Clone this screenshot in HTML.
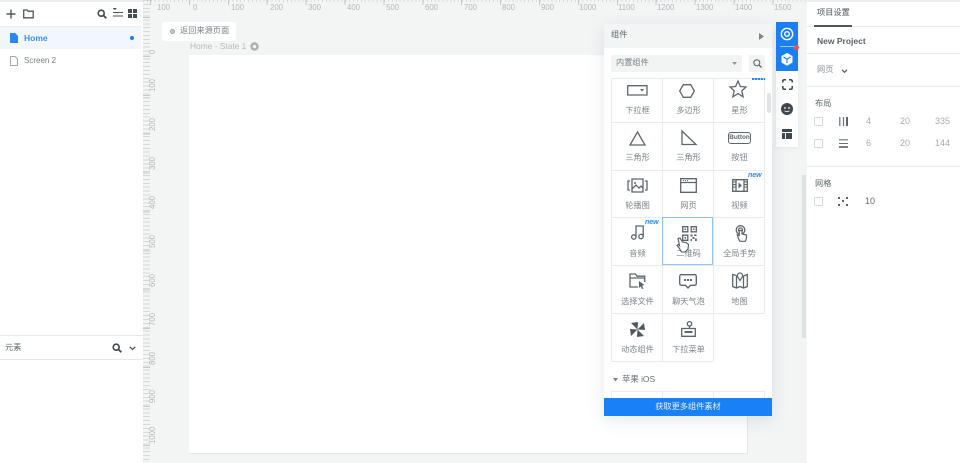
<!DOCTYPE html>
<html><head><meta charset="utf-8">
<style>
html,body{margin:0;padding:0;width:960px;height:463px;overflow:hidden;background:#f3f5f5;font-family:"Liberation Sans","Noto Sans CJK SC",sans-serif;color:#666e72}
#w{position:absolute;left:0;top:0;width:960px;height:463px;overflow:hidden;filter:blur(.3px)}
.a{position:absolute}
.t{position:absolute;white-space:nowrap;line-height:1}
.cell{position:absolute;width:51px;text-align:center;font-size:8.2px;color:#7d8588;white-space:nowrap;line-height:1}
.rl{position:absolute;top:4px;font-size:7.8px;color:#b3b8ba;line-height:1}
.rv{position:absolute;left:149px;font-size:7.8px;color:#b3b8ba;line-height:1;transform:rotate(-90deg);transform-origin:0 0}
svg{position:absolute;overflow:visible}
.i{fill:none;stroke:#5d666b;stroke-width:1.3}
.hl{position:absolute;height:1px;background:#e9ecec}
</style></head><body><div id="w">
<!-- rulers -->
<div class="a" style="left:143px;top:0;width:664px;height:2px;background:repeating-linear-gradient(90deg,#d5d9da 0 1px,transparent 1px 3.89px)"></div>
<div class="a" style="left:150px;top:0;width:657px;height:5px;background:repeating-linear-gradient(90deg,#c3c8ca 0 1px,transparent 1px 38.9px)"></div>
<div class="a" style="left:143px;top:0;width:7px;height:463px;background:repeating-linear-gradient(180deg,#d5d9da 0 1px,transparent 1px 3.89px)"></div>
<div class="a" style="left:143px;top:17px;width:7px;height:446px;background:repeating-linear-gradient(180deg,#c3c8ca 0 1px,transparent 1px 38.9px)"></div>
<div class="rl" style="left:157px">100</div><div class="rl" style="left:193px">0</div><div class="rl" style="left:231px">100</div><div class="rl" style="left:270px">200</div><div class="rl" style="left:308px">300</div><div class="rl" style="left:347px">400</div><div class="rl" style="left:386px">500</div><div class="rl" style="left:425px">600</div><div class="rl" style="left:464px">700</div><div class="rl" style="left:502px">800</div><div class="rl" style="left:541px">900</div><div class="rl" style="left:579px">1000</div><div class="rl" style="left:618px">1100</div><div class="rl" style="left:657px">1200</div><div class="rl" style="left:696px">1300</div><div class="rl" style="left:735px">1400</div><div class="rl" style="left:774px">1500</div>
<div class="rv" style="top:54px">0</div><div class="rv" style="top:92px">100</div><div class="rv" style="top:131px">200</div><div class="rv" style="top:170px">300</div><div class="rv" style="top:209px">400</div><div class="rv" style="top:248px">500</div><div class="rv" style="top:287px">600</div><div class="rv" style="top:326px">700</div><div class="rv" style="top:365px">800</div><div class="rv" style="top:403px">900</div><div class="rv" style="top:444px">1000</div>

<!-- canvas -->
<div class="a" style="left:189px;top:55px;width:558px;height:398px;background:#fff;border-right:1px solid #e6e8e8;border-bottom:1px solid #e6e8e8"></div>
<div class="a" style="left:162px;top:22px;width:74px;height:19px;background:#fff;border-radius:2px"></div>
<div class="a" style="left:170px;top:29px;width:3px;height:3px;border:1px solid #9aa2a5;background:#c5cacc;border-radius:50%"></div>
<div class="t" style="left:180px;top:27px;font-size:8.2px;color:#7a8286">返回来源页面</div>
<div class="t" style="left:190px;top:42px;font-size:8.4px;color:#b4b9bb">Home - State 1</div>
<svg style="left:250px;top:42px" width="9" height="9"><circle cx="4.5" cy="4.5" r="3" fill="none" stroke="#a9afb2" stroke-width="2.4"/></svg>

<!-- left panel -->
<div class="a" style="left:0;top:2px;width:143px;height:461px;background:#fff"></div>
<div class="a" style="left:0;top:0;width:143px;height:2px;background:#eceeee"></div>
<div class="a" style="left:0;top:26px;width:141px;height:1px;background:#eef0f0"></div>
<svg style="left:6px;top:9px" width="10" height="10"><path d="M5 0.5V9.5M0.5 5H9.5" stroke="#4d565b" stroke-width="1.4"/></svg>
<svg style="left:23px;top:9px" width="11" height="10"><path d="M.7 1H4L5 2.2H10.2V8.8H.7Z" fill="none" stroke="#4d565b" stroke-width="1.3"/></svg>
<svg style="left:97px;top:9px" width="10" height="10"><circle cx="4.2" cy="4.2" r="3" fill="none" stroke="#3f484d" stroke-width="1.6"/><path d="M6.5 6.5L9.3 9.3" stroke="#3f484d" stroke-width="1.8"/></svg>
<svg style="left:112px;top:8px" width="11" height="9"><path d="M1 .7H4.5M1 4.5H11M1 8H11" stroke="#4d565b" stroke-width="1.1"/><path d="M3 0V2" stroke="#4d565b"/></svg>
<svg style="left:128px;top:9px" width="9" height="9"><path d="M0 0H4V4H0ZM5 0H9V4H5ZM0 5H4V9H0ZM5 5H9V9H5Z" fill="#454e53"/></svg>
<div class="a" style="left:0;top:27px;width:141px;height:22px;background:#f2f7fd"></div>
<svg style="left:10px;top:33px" width="8" height="10"><path d="M0 0H5L8 3V10H0Z" fill="#2b86f0"/></svg>
<div class="t" style="left:24px;top:34px;font-size:8.5px;font-weight:bold;color:#3b8fee">Home</div>
<div class="a" style="left:130px;top:36px;width:4px;height:4px;border-radius:50%;background:#1b7ff0"></div>
<svg style="left:10px;top:56px" width="8" height="10"><path d="M.5.5H5L7.5 3V9.5H.5Z" fill="none" stroke="#a3a9ac"/></svg>
<div class="t" style="left:24px;top:56.5px;font-size:8px;color:#777f83">Screen 2</div>
<div class="a" style="left:0;top:335px;width:143px;height:1px;background:#e8eaea"></div>
<div class="a" style="left:0;top:359px;width:143px;height:1px;background:#e3e9f0"></div>
<div class="t" style="left:5px;top:344px;font-size:8.2px;color:#666e72">元素</div>
<svg style="left:112px;top:343px" width="10" height="10"><circle cx="4.2" cy="4.2" r="3" fill="none" stroke="#3f484d" stroke-width="1.6"/><path d="M6.5 6.5L9.3 9.3" stroke="#3f484d" stroke-width="1.8"/></svg>
<svg style="left:129px;top:346px" width="7" height="5"><path d="M.7.8L3.5 3.5L6.3.8" fill="none" stroke="#4d565b" stroke-width="1.3"/></svg>

<!-- right panel -->
<div class="a" style="left:807px;top:2px;width:153px;height:461px;background:#fff"></div>
<div class="a" style="left:807px;top:0;width:153px;height:2px;background:#eceeee"></div>
<div class="a" style="left:802px;top:175px;width:4px;height:163px;background:#dfe2e3"></div>
<div class="t" style="left:817px;top:9px;font-size:8.2px;color:#4f585d">项目设置</div>
<div class="hl" style="left:807px;top:26px;width:153px"></div>
<div class="a" style="left:814px;top:25px;width:38px;height:2px;background:#4d565b"></div>
<div class="t" style="left:817px;top:36.5px;font-size:8.5px;font-weight:bold;color:#5a6368">New Project</div>
<div class="hl" style="left:807px;top:53px;width:153px"></div>
<div class="t" style="left:817px;top:66px;font-size:8.2px;color:#8b9295">网页</div>
<svg style="left:841px;top:69px" width="7" height="5"><path d="M1 .8L3.5 3.3L6 .8" fill="none" stroke="#4d565b" stroke-width="1.2"/></svg>
<div class="hl" style="left:807px;top:86px;width:153px"></div>
<div class="t" style="left:815px;top:99.5px;font-size:8.2px;color:#5f686c">布局</div>
<div class="a" style="left:814px;top:117px;width:7px;height:7px;border:1px solid #d5d8d9;border-radius:1px"></div>
<svg style="left:839px;top:117px" width="9" height="9"><path d="M.8 0V9M4.5 0V9" stroke="#6a7276" stroke-width="1.2"/><path d="M8 0V9" stroke="#4d565b" stroke-width="1.8"/></svg>
<div class="t" style="left:866px;top:117px;font-size:9px;color:#a7acae">4</div>
<div class="t" style="left:900px;top:117px;font-size:9px;color:#a7acae">20</div>
<div class="t" style="left:935px;top:117px;font-size:9px;color:#a7acae">335</div>
<div class="a" style="left:814px;top:139px;width:7px;height:7px;border:1px solid #d5d8d9;border-radius:1px"></div>
<svg style="left:839px;top:139px" width="9" height="9"><path d="M0 .8H9M0 4.5H9" stroke="#6a7276" stroke-width="1.1"/><path d="M0 8H9" stroke="#4d565b" stroke-width="1.5"/></svg>
<div class="t" style="left:866px;top:139px;font-size:9px;color:#a7acae">6</div>
<div class="t" style="left:900px;top:139px;font-size:9px;color:#a7acae">20</div>
<div class="t" style="left:935px;top:139px;font-size:9px;color:#a7acae">144</div>
<div class="hl" style="left:807px;top:166px;width:153px"></div>
<div class="t" style="left:815px;top:179.5px;font-size:8.2px;color:#5f686c">网格</div>
<div class="a" style="left:814px;top:197px;width:7px;height:7px;border:1px solid #d5d8d9;border-radius:1px"></div>
<svg style="left:838px;top:197px" width="10" height="9"><path d="M0 0H2V2H0ZM8 0H10V2H8ZM0 7H2V9H0ZM8 7H10V9H8ZM4 3H6V5H4Z" fill="#596165"/></svg>
<div class="t" style="left:865px;top:197px;font-size:9px;color:#5f686c">10</div>

<!-- side toolbar -->
<div class="a" style="left:776px;top:22px;width:22px;height:125px;background:#fff;box-shadow:0 1px 5px rgba(0,0,0,.06)"></div>
<div class="a" style="left:776px;top:22px;width:22px;height:49px;background:#1a7ff5"></div>
<div class="a" style="left:780px;top:46px;width:16px;height:1px;background:#9cc7fb"></div>
<div class="a" style="left:794px;top:45px;width:5px;height:5px;border-radius:50%;background:#f0524f"></div>
<svg style="left:780px;top:27px" width="14" height="14"><circle cx="7" cy="7" r="5.7" fill="none" stroke="#fff" stroke-width="1.4"/><circle cx="7" cy="7" r="2.3" fill="none" stroke="#fff" stroke-width="1.4"/></svg>
<svg style="left:781px;top:53px" width="12" height="13"><path d="M6 0L11.5 3V9.5L6 12.8L.5 9.5V3Z" fill="#fff"/><path d="M2.5 4L6 6.2L9.5 4M6 6.2V10" fill="none" stroke="#1a7ff5" stroke-width="1.1"/></svg>
<svg style="left:782px;top:79px" width="11" height="11"><path d="M.8 3.5V2.3Q.8.8 2.3.8H4M7 .8H8.7Q10.2.8 10.2 2.3V3.5M10.2 7V8.7Q10.2 10.2 8.7 10.2H7M4 10.2H2.3Q.8 10.2.8 8.7V7" fill="none" stroke="#3f484d" stroke-width="1.5"/></svg>
<svg style="left:781px;top:103px" width="12" height="12"><circle cx="6" cy="6" r="6" fill="#3f484d"/><circle cx="4" cy="5" r=".9" fill="#fff"/><circle cx="8" cy="5" r=".9" fill="#fff"/><path d="M3.5 7.8Q6 9.6 8.5 7.8" fill="none" stroke="#fff" stroke-width=".8"/></svg>
<svg style="left:782px;top:129px" width="10" height="10"><path d="M0 0H10V3H0ZM0 4H3V10H0ZM4 4H10V10H4Z" fill="#3f484d"/></svg>

<!-- widget panel -->
<div class="a" style="left:604px;top:24px;width:168px;height:392px;background:#fff;box-shadow:0 4px 16px rgba(90,110,130,.16);overflow:hidden">
  <div class="a" style="left:0;top:0;width:168px;height:24px;background:#f3f4f4"></div>
  <div class="t" style="left:7px;top:7px;font-size:8.2px;color:#5f686c">组件</div>
  <svg style="left:155px;top:9px" width="5" height="7"><path d="M0 0L5 3.5L0 7Z" fill="#7c8488"/></svg>
  <div class="a" style="left:7px;top:31px;width:131px;height:17px;background:#f2f3f3;border-radius:2px"></div>
  <div class="t" style="left:12px;top:35px;font-size:8.2px;color:#7a8286">内置组件</div>
  <svg style="left:128px;top:38px" width="5" height="3"><path d="M0 0H5L2.5 3Z" fill="#8f9699"/></svg>
  <div class="a" style="left:145px;top:31px;width:16px;height:17px;background:#f2f3f3;border-radius:2px"></div>
  <svg style="left:149px;top:35px" width="9" height="9"><circle cx="3.8" cy="3.8" r="3" fill="none" stroke="#5d666b" stroke-width="1.1"/><path d="M6 6L8.5 8.5" stroke="#5d666b" stroke-width="1.3"/></svg>
  <div class="a" style="left:163px;top:69px;width:4px;height:20px;background:#e0e3e4;border-radius:2px"></div>

  <!-- grid lines -->
  <div class="hl" style="left:7px;top:54px;width:154px"></div>
  <div class="hl" style="left:7px;top:98px;width:154px"></div>
  <div class="hl" style="left:7px;top:146px;width:154px"></div>
  <div class="hl" style="left:7px;top:193px;width:154px"></div>
  <div class="hl" style="left:7px;top:241px;width:154px"></div>
  <div class="hl" style="left:7px;top:289px;width:154px"></div>
  <div class="hl" style="left:7px;top:337px;width:103px"></div>
  <div class="a" style="left:7px;top:54px;width:1px;height:283px;background:#e9ecec"></div>
  <div class="a" style="left:58px;top:54px;width:1px;height:283px;background:#e9ecec"></div>
  <div class="a" style="left:109px;top:54px;width:1px;height:283px;background:#e9ecec"></div>
  <div class="a" style="left:160px;top:54px;width:1px;height:235px;background:#e9ecec"></div>
  <div class="hl" style="left:7px;top:367px;width:154px"></div>
  <div class="a" style="left:7px;top:367px;width:1px;height:8px;background:#e9ecec"></div>
  <div class="a" style="left:58px;top:367px;width:1px;height:8px;background:#e9ecec"></div>
  <div class="a" style="left:109px;top:367px;width:1px;height:8px;background:#e9ecec"></div>
  <div class="a" style="left:160px;top:367px;width:1px;height:8px;background:#e9ecec"></div>

  <!-- selected -->
  <div class="a" style="left:58px;top:193px;width:49px;height:46px;border:1.5px solid #92c3f7"></div>

  <!-- labels -->
  <div class="cell" style="left:8px;top:82.5px">下拉框</div><div class="cell" style="left:59px;top:82.5px">多边形</div><div class="cell" style="left:110px;top:82.5px">星形</div>
  <div class="cell" style="left:8px;top:130px">三角形</div><div class="cell" style="left:59px;top:130px">三角形</div><div class="cell" style="left:110px;top:130px">按钮</div>
  <div class="cell" style="left:8px;top:178px">轮播图</div><div class="cell" style="left:59px;top:178px">网页</div><div class="cell" style="left:110px;top:178px">视频</div>
  <div class="cell" style="left:8px;top:226px">音频</div><div class="cell" style="left:59px;top:226px">二维码</div><div class="cell" style="left:110px;top:226px">全局手势</div>
  <div class="cell" style="left:8px;top:274px">选择文件</div><div class="cell" style="left:59px;top:274px">聊天气泡</div><div class="cell" style="left:110px;top:274px">地图</div>
  <div class="cell" style="left:8px;top:322px">动态组件</div><div class="cell" style="left:59px;top:322px">下拉菜单</div>

  <!-- icons row 1 -->
  <svg style="left:23px;top:61px" width="21" height="11"><path class="i" d="M.7.7H20V10H.7Z"/><path d="M13 4H17L15 6.5Z" fill="#5d666b"/></svg>
  <svg style="left:75px;top:60px" width="16" height="14"><path class="i" d="M4.3.7H11.7L15.3 7L11.7 13.3H4.3L.7 7Z"/></svg>
  <svg style="left:125px;top:56px" width="18" height="18"><path class="i" d="M9 1L11.4 6.5L17 7L12.8 10.8L14.1 16.8L9 13.6L3.9 16.8L5.2 10.8L1 7L6.6 6.5Z"/></svg>
  <div class="a" style="left:148px;top:54px;width:13px;height:2px;background:repeating-linear-gradient(90deg,#2a86ee 0 2px,#a9cff8 2px 3px)"></div>
  <!-- row 2 -->
  <svg style="left:25px;top:107px" width="17" height="15"><path class="i" d="M8.5 1L16 14H1Z"/></svg>
  <svg style="left:77px;top:106px" width="16" height="16"><path class="i" d="M1 1L15 14.5H1Z"/></svg>
  <div class="a" style="left:124px;top:108px;width:21px;height:10px;border:1.2px solid #5d666b;border-radius:3px;font-size:6.4px;font-weight:bold;text-align:center;line-height:10px;color:#5d666b">Button</div>
  <!-- row 3 -->
  <svg style="left:23px;top:154px" width="21" height="15"><path class="i" d="M5 1H16V14H5Z"/><path class="i" d="M3 3H1V12H3M18 3H20V12H18M5 11L9 7L12 10L14 8L16 10"/><circle cx="8" cy="5" r="1" fill="#5d666b"/></svg>
  <svg style="left:76px;top:154px" width="17" height="15"><path class="i" d="M.7.7H16.3V14.3H.7ZM.7 4.5H16.3"/><path d="M3 2.6H4M5 2.6H6M7 2.6H8" stroke="#5d666b"/></svg>
  <svg style="left:128px;top:155px" width="16" height="13"><path class="i" d="M.7.7H15.3V12.3H.7ZM4 .7V12.3M12 .7V12.3"/><path d="M6.5 3.5L10 6.5L6.5 9.5Z" fill="#5d666b"/><path d="M1 3H4M1 5.5H4M1 8H4M12 3H15M12 5.5H15M12 8H15" stroke="#5d666b"/></svg>
  <div class="t" style="left:144px;top:148px;font-size:7px;font-weight:bold;font-style:italic;color:#2a86ee">new</div>
  <!-- row 4 -->
  <svg style="left:27px;top:201px" width="13" height="15"><circle cx="2.8" cy="12" r="2.2" class="i"/><circle cx="10" cy="11.5" r="2.2" class="i"/><path class="i" d="M5 12V1H12.2V11.5"/></svg>
  <div class="t" style="left:41px;top:195px;font-size:7px;font-weight:bold;font-style:italic;color:#2a86ee">new</div>
  <svg style="left:78px;top:202px" width="15" height="15"><path class="i" fill="none" d="M.7.7H5.8V5.8H.7ZM9.2.7H14.3V5.8H9.2ZM.7 9.2H5.8V14.3H.7Z"/><path d="M2.5 2.5H4V4H2.5ZM11 2.5H12.5V4H11ZM2.5 11H4V12.5H2.5ZM8.5 8.5H10.5V10.5H8.5ZM12 8.5H14.5V10H12ZM10.5 11H12.5V13H10.5ZM13 12.5H14.8V15H13ZM8.5 13H10V15H8.5Z" fill="#5d666b"/></svg>
  <svg style="left:131px;top:201px" width="12" height="17"><circle cx="5.5" cy="5" r="4.3" class="i"/><circle cx="5.5" cy="5" r="2" class="i"/><path d="M4.3 5.5V10.5L2.3 9.8L3 12.5L4.8 16.3H10.5L11.5 12.5V10L7 9V5.5Z" fill="#fff" stroke="#5d666b" stroke-width="1.2"/></svg>
  <!-- cursor -->
  <svg style="left:72px;top:213px;z-index:2" width="14" height="16"><path d="M2 1.5L4 1L6.5 5L10 5.5L12.5 7.5L12 12L9 15H5.5L2.8 10.5L1 8.5L2.5 7.5L3.5 8.5Z" fill="#fff" stroke="#4d565b" stroke-width="1.1"/></svg>
  <!-- row 5 -->
  <svg style="left:25px;top:249px" width="17" height="17"><path class="i" d="M9 14H1V1H6.5L8 3.2H15.7V9M1 5H15.7"/><path d="M10 8L15.5 12L13 12.7L14.5 15.5L13 16L11.8 13.5L10 15Z" fill="#5d666b"/></svg>
  <svg style="left:75px;top:250px" width="18" height="15"><path class="i" d="M2.5.7H15.5Q17.3.7 17.3 2.5V9.5Q17.3 11.3 15.5 11.3H11.5L9 14L6.5 11.3H2.5Q.7 11.3.7 9.5V2.5Q.7.7 2.5.7Z"/><path d="M5 5H7V7H5ZM8 5H10V7H8ZM11 5H13V7H11Z" fill="#5d666b"/></svg>
  <svg style="left:128px;top:248px" width="16" height="17"><path class="i" d="M4.5 3.5L.7 2.5V14.5L4.5 16L8 14.5L11.5 16L15.3 14.5V2.5L11.5 4M4.5 3.5V16M11.5 4V16"/><path d="M8 1A2.6 2.6 0 0 1 10.6 3.6C10.6 5.2 9 6.5 8 8.5C7 6.5 5.4 5.2 5.4 3.6A2.6 2.6 0 0 1 8 1Z" fill="#fff" stroke="#5d666b" stroke-width="1.2"/></svg>
  <!-- row 6 -->
  <svg style="left:26px;top:298px" width="15" height="15"><path d="M7.5 7.5L1 1L8 0ZM7.5 7.5L14 1L15 8ZM7.5 7.5L14 14L7 15ZM7.5 7.5L1 14L0 7Z" fill="#4f585d"/></svg>
  <svg style="left:77px;top:297px" width="15" height="16"><circle cx="8.5" cy="2.8" r="2.2" class="i"/><path class="i" d="M8.5 5V7.5M.7 7.5H14.3V15.3H.7Z"/><path d="M3.5 10H11.5V12H3.5Z" fill="#5d666b"/></svg>

  <svg style="left:9px;top:354px" width="5" height="4"><path d="M0 0H5L2.5 3.5Z" fill="#7c8488"/></svg>
  <div class="t" style="left:18px;top:351px;font-size:8.4px;color:#666e72">苹果 iOS</div>

  <div class="a" style="left:0;top:373.5px;width:168px;height:18.5px;background:#1a80f5;color:#e4f0fe;font-size:8.2px;line-height:18.5px;text-align:center">获取更多组件素材</div>
</div>
</div></body></html>
